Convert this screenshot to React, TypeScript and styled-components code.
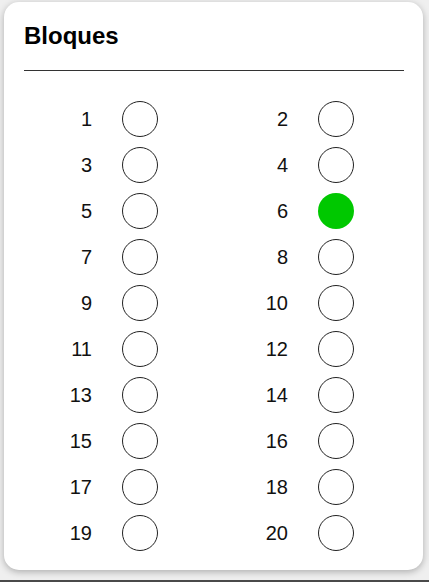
import React from "react";
import styled, { createGlobalStyle } from "styled-components";

const Global = createGlobalStyle`
  html, body {
    margin: 0;
    padding: 0;
    background: #efefef;
    font-family: "Liberation Sans", Arial, sans-serif;
  }
`;

const Page = styled.div`
  display: flex;
  flex-direction: column;
  padding: 2px 6px 0 4px;
`;

const Card = styled.section`
  background: #fff;
  border-radius: 15px;
  box-shadow: 0 2px 7px rgba(0, 0, 0, 0.28);
  padding: 20px 19px 14px 20px;
  height: 568px;
  box-sizing: border-box;
`;

const Title = styled.h2`
  margin: 0;
  font-size: 24px;
  line-height: 28px;
  font-weight: 700;
  color: #000;
`;

const Divider = styled.hr`
  margin: 20px 0 0 0;
  border: 0;
  height: 1px;
  background: #333;
`;

const Grid = styled.div`
  display: grid;
  grid-template-columns: 196px 196px;
  grid-auto-rows: 46px;
  margin-top: 25px;
  padding-left: 18px;
`;

const Item = styled.div`
  display: flex;
  align-items: center;
  gap: 30px;
`;

const Label = styled.span`
  width: 50px;
  text-align: right;
  font-size: 20px;
  color: #111;
`;

const Dot = styled.span<{ $on: boolean }>`
  width: 36px;
  height: 36px;
  box-sizing: border-box;
  border-radius: 50%;
  border: ${(p) => (p.$on ? "none" : "1px solid #222")};
  background: ${(p) => (p.$on ? "#00c800" : "#fff")};
`;

const PageEdge = styled.div`
  height: 2px;
  margin: 10px -6px 0 -4px;
  background: #4a4a4a;
`;

const blocks = Array.from({ length: 20 }, (_, i) => i + 1);

export default function App() {
  return (
    <>
      <Global />
      <Page>
        <Card>
          <Title>Bloques</Title>
          <Divider />
          <Grid>
            {blocks.map((n) => (
              <Item key={n}>
                <Label>{n}</Label>
                <Dot $on={n === 6} />
              </Item>
            ))}
          </Grid>
        </Card>
        <PageEdge />
      </Page>
    </>
  );
}
